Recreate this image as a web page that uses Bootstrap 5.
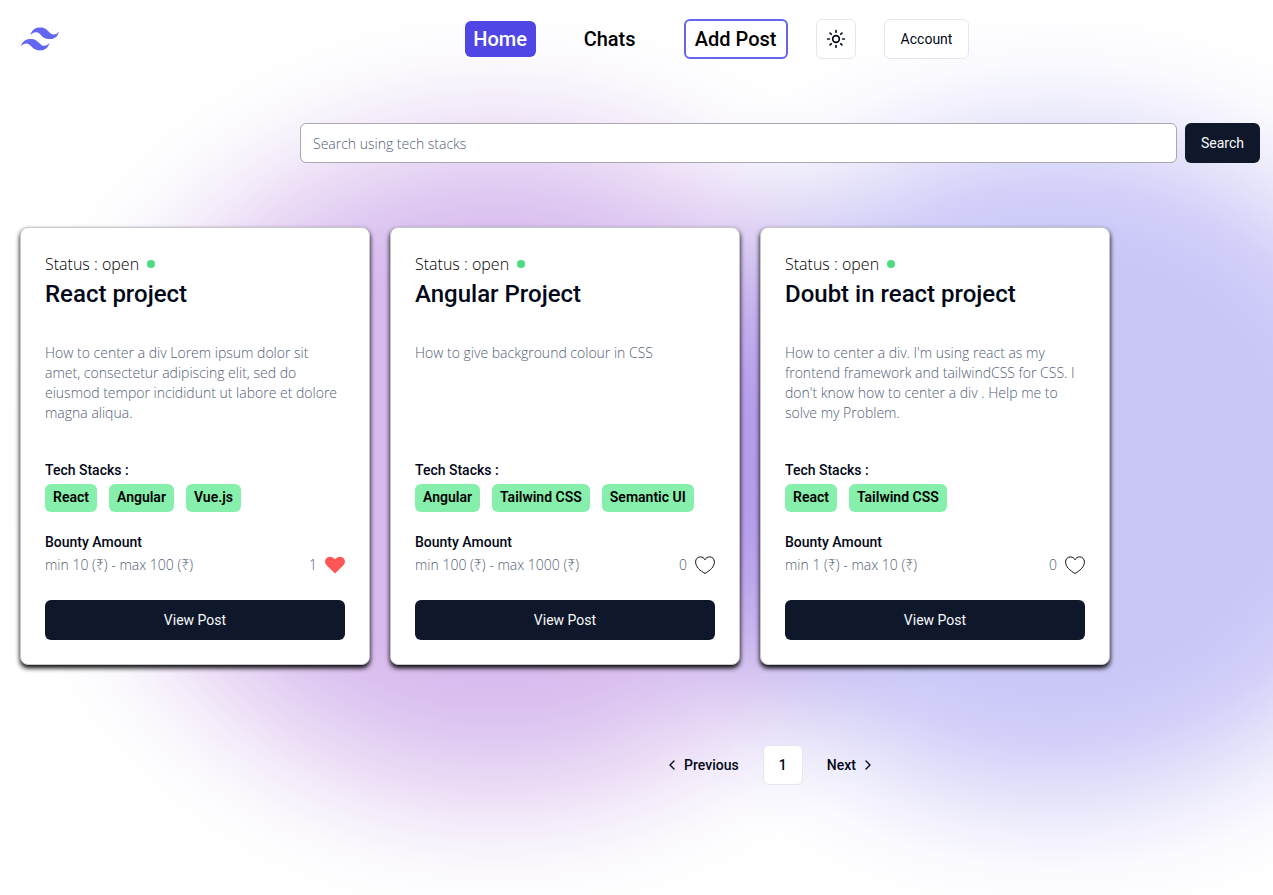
<!DOCTYPE html>
<html lang="en">
<head>
<meta charset="utf-8">
<meta name="viewport" content="width=device-width, initial-scale=1">
<title>Posts</title>
<link href="https://cdn.jsdelivr.net/npm/bootstrap@5.3.0/dist/css/bootstrap.min.css" rel="stylesheet">
<style>
  :root { --ink: #020817; --navy: #0f172a; --muted: #64748b; --muted-thin: #526077; --line: #e2e8f0; --indigo: #6366f1; }
  body {
    font-family: "Open Sans", "Noto Sans", sans-serif; font-weight: 300; font-size: 14px; line-height: 20px;
    color: var(--ink); min-height: 100vh;
    background:
      radial-gradient(ellipse 500px 455px at 39% 52%, #d8bbee 0 45%, #dabfef 52%, #e0cbf2 61%, #ebdcf6 71%, #f4edfa 80%, #fbf9fd 89%, #fff 100%),
      radial-gradient(ellipse 500px 455px at 83% 52%, #c9c7f6 0 45%, #cccaf8 53%, #d4d2f9 62%, #e2e0fa 71%, #f0effc 80%, #fafaff 89%, #fff 100%),
      #fff;
    background-blend-mode: multiply;
  }
  .medium-text { font-family: Roboto, sans-serif; font-weight: 500; }
  .btn { --bs-btn-border-radius: 6px; --bs-btn-font-size: 14px; --bs-btn-line-height: 20px; font-family: Roboto, sans-serif; height: 40px; padding: 0 16px; }
  .btn-navy { --bs-btn-bg: var(--navy); --bs-btn-color: #f8fafc; --bs-btn-hover-bg: #1e293b; --bs-btn-hover-color: #f8fafc; --bs-btn-active-bg: #1e293b; --bs-btn-active-color: #fff; border: 0; }
  .btn-plain { --bs-btn-bg: #fff; --bs-btn-color: var(--ink); --bs-btn-border-color: var(--line); --bs-btn-hover-bg: #f1f5f9; --bs-btn-hover-border-color: var(--line); }
  .btn-theme { width: 40px; padding: 0; }
  .top-bar { padding: 19px 20px 16px; }
  .top-nav { margin-left: auto; margin-right: 23%; column-gap: 28px; }
  .nav-pills-group { column-gap: 40px; }
  .nav-pill { font-size: 20px; line-height: 28px; padding: 4px 8px; border-radius: 6px; color: #000; text-decoration: none; text-align: center; min-width: 68px; }
  .nav-pill.current { background: #4f46e5; color: #fff; min-width: 71px; }
  .nav-pill.outlined { border: 2px solid var(--indigo); background: #fff; min-width: 104px; }
  .search-row { padding: 48px 13px 0 300px; }
  .search-row .form-control { height: 40px; font-size: 14px; font-weight: 300; border-color: #a9a9ad; border-radius: 6px; padding: 8px 12px; }
  .search-row .form-control::placeholder { color: var(--muted-thin); opacity: 1; }
  .post-list { padding: 64px 20px 0; gap: 20px; }
  .post-card { width: 350px; padding: 24px; border: 1px solid #c8c8cc; border-radius: 8px; box-shadow: 0 3px 5px #000; }
  .status-line { font-size: 16px; line-height: 24px; color: #000; }
  .status-dot { width: 8px; height: 8px; background: #4ade80; }
  .post-title { font-size: 24px; line-height: 24px; margin: 6px 0 0; }
  .post-text { color: var(--muted-thin); min-height: 80px; margin: 37px 0; }
  .tag-list { gap: 12px; margin: 4px 0 20px; }
  .tag { background: #86efac; color: #000; border-radius: 6px; padding: 3px 8px 5px; font-weight: 600; }
  .bounty { color: var(--muted-thin); margin: 3px 0 25px; }
  .like { border: 0; background: none; padding: 0; line-height: 0; }
  .pager { padding: 80px 0 110px 267px; }
  .pager a { color: var(--ink); text-decoration: none; }
  .pager .page-now { width: 40px; height: 40px; background: #fff; border: 1px solid var(--line); border-radius: 6px; }
  @media (max-width: 900px) {
    .top-nav { margin-right: 0; }
    .top-nav, .nav-pills-group { column-gap: 8px; }
    .search-row { padding-left: 20px; }
    .pager { padding-left: 0; }
  }
</style>
</head>
<body>
<header class="top-bar d-flex flex-wrap align-items-center">
  <a href="#" aria-label="Home page">
    <svg width="40" height="40" viewBox="-.6 -.6 25.2 25.2" fill="#6366f1" aria-hidden="true"><path d="M12.001 4.8c-3.2 0-5.2 1.6-6 4.8 1.2-1.6 2.6-2.2 4.2-1.8.913.228 1.565.89 2.288 1.624C13.666 10.618 15.027 12 18.001 12c3.2 0 5.2-1.6 6-4.8-1.2 1.6-2.6 2.2-4.2 1.8-.913-.228-1.565-.89-2.288-1.624C16.337 6.182 14.976 4.8 12.001 4.8zm-6 7.2c-3.2 0-5.2 1.6-6 4.8 1.2-1.6 2.6-2.2 4.2-1.8.913.228 1.565.89 2.288 1.624 1.177 1.194 2.538 2.576 5.512 2.576 3.2 0 5.2-1.6 6-4.8-1.2 1.6-2.6 2.2-4.2 1.8-.913-.228-1.565-.89-2.288-1.624C10.337 13.382 8.976 12 6.001 12z"/></svg>
  </a>
  <nav class="top-nav d-flex flex-wrap align-items-center">
    <div class="nav-pills-group d-flex align-items-center">
      <a class="nav-pill current medium-text" href="#">Home</a>
      <a class="nav-pill medium-text" href="#">Chats</a>
      <a class="nav-pill outlined medium-text" href="#">Add Post</a>
    </div>
    <button class="btn btn-plain btn-theme d-flex align-items-center justify-content-center" type="button" aria-label="Toggle theme">
      <svg width="20" height="20" viewBox="0 0 24 24" fill="none" stroke="currentColor" stroke-width="2" stroke-linecap="round"><circle cx="12" cy="12" r="4"/><path d="M12 2v2M12 20v2M4.93 4.93l1.41 1.41M17.66 17.66l1.41 1.41M2 12h2M20 12h2M6.34 17.66l-1.41 1.41M19.07 4.93l-1.41 1.41"/></svg>
    </button>
    <button class="btn btn-plain" type="button">Account</button>
  </nav>
</header>

<main>
  <form class="search-row d-flex gap-2" role="search">
    <input class="form-control" type="search" placeholder="Search using tech stacks" aria-label="Search using tech stacks">
    <button class="btn btn-navy flex-shrink-0" type="button">Search</button>
  </form>

  <section class="post-list d-flex flex-wrap">
    <article class="post-card bg-white">
      <div class="status-line d-flex align-items-center gap-2">Status : open <span class="status-dot rounded-circle"></span></div>
      <h3 class="post-title medium-text">React project</h3>
      <p class="post-text">How to center a div Lorem ipsum dolor sit amet, consectetur adipiscing elit, sed do eiusmod tempor incididunt ut labore et dolore magna aliqua.</p>
      <div class="medium-text">Tech Stacks :</div>
      <div class="tag-list d-flex medium-text"><span class="tag">React</span><span class="tag">Angular</span><span class="tag">Vue.js</span></div>
      <div class="medium-text">Bounty Amount</div>
      <div class="bounty d-flex align-items-center gap-2"><span class="me-auto">min 10 (₹) - max 100 (₹)</span><span>1</span>
        <button class="like" type="button" aria-label="Unlike"><svg width="20" height="20" viewBox="0 0 20 20" fill="#ff5555"><path d="M10 18.5 1.6 10.2C-.6 7.9-.3 4.300 2 2.700 4.500 .9 7.800 1.500 10 4.200 12.200 1.500 15.500 .9 18 2.700c2.300 1.600 2.600 5.200.4 7.500z"/></svg></button></div>
      <button class="btn btn-navy w-100" type="button">View Post</button>
    </article>

    <article class="post-card bg-white">
      <div class="status-line d-flex align-items-center gap-2">Status : open <span class="status-dot rounded-circle"></span></div>
      <h3 class="post-title medium-text">Angular Project</h3>
      <p class="post-text">How to give background colour in CSS</p>
      <div class="medium-text">Tech Stacks :</div>
      <div class="tag-list d-flex medium-text"><span class="tag">Angular</span><span class="tag">Tailwind CSS</span><span class="tag">Semantic UI</span></div>
      <div class="medium-text">Bounty Amount</div>
      <div class="bounty d-flex align-items-center gap-2"><span class="me-auto">min 100 (₹) - max 1000 (₹)</span><span>0</span>
        <button class="like" type="button" aria-label="Like"><svg width="20" height="20" viewBox="0 0 20 20" fill="none" stroke="#111" stroke-linejoin="round"><path d="M10 18.500C5 15.500.6 12 .6 6.900.6 4 2.600 1.900 5.300 1.900 7.500 1.900 9.200 3 10 4.800c.8-1.800 2.500-2.900 4.700-2.900 2.700 0 4.700 2.100 4.700 5C19.400 12 15 15.500 10 18.500z"/></svg></button></div>
      <button class="btn btn-navy w-100" type="button">View Post</button>
    </article>

    <article class="post-card bg-white">
      <div class="status-line d-flex align-items-center gap-2">Status : open <span class="status-dot rounded-circle"></span></div>
      <h3 class="post-title medium-text">Doubt in react project</h3>
      <p class="post-text">How to center a div. I'm using react as my frontend framework and tailwindCSS for CSS. I don't know how to center a div . Help me to solve my Problem.</p>
      <div class="medium-text">Tech Stacks :</div>
      <div class="tag-list d-flex medium-text"><span class="tag">React</span><span class="tag">Tailwind CSS</span></div>
      <div class="medium-text">Bounty Amount</div>
      <div class="bounty d-flex align-items-center gap-2"><span class="me-auto">min 1 (₹) - max 10 (₹)</span><span>0</span>
        <button class="like" type="button" aria-label="Like"><svg width="20" height="20" viewBox="0 0 20 20" fill="none" stroke="#111" stroke-linejoin="round"><path d="M10 18.500C5 15.500.6 12 .6 6.900.6 4 2.600 1.900 5.300 1.900 7.500 1.900 9.200 3 10 4.800c.8-1.800 2.500-2.900 4.700-2.900 2.700 0 4.700 2.100 4.700 5C19.400 12 15 15.500 10 18.500z"/></svg></button></div>
      <button class="btn btn-navy w-100" type="button">View Post</button>
    </article>
  </section>

  <nav class="pager medium-text d-flex align-items-center justify-content-center gap-4" aria-label="Pagination">
    <a class="d-flex align-items-center gap-1" href="#"><svg width="16" height="16" viewBox="0 0 24 24" fill="none" stroke="currentColor" stroke-width="2" stroke-linecap="round" stroke-linejoin="round"><path d="m15 18-6-6 6-6"/></svg>Previous</a>
    <a class="page-now d-flex align-items-center justify-content-center" href="#" aria-current="page">1</a>
    <a class="d-flex align-items-center gap-1" href="#">Next<svg width="16" height="16" viewBox="0 0 24 24" fill="none" stroke="currentColor" stroke-width="2" stroke-linecap="round" stroke-linejoin="round"><path d="m9 18 6-6-6-6"/></svg></a>
  </nav>
</main>
<script src="https://cdn.jsdelivr.net/npm/bootstrap@5.3.0/dist/js/bootstrap.bundle.min.js"></script>
</body>
</html>
